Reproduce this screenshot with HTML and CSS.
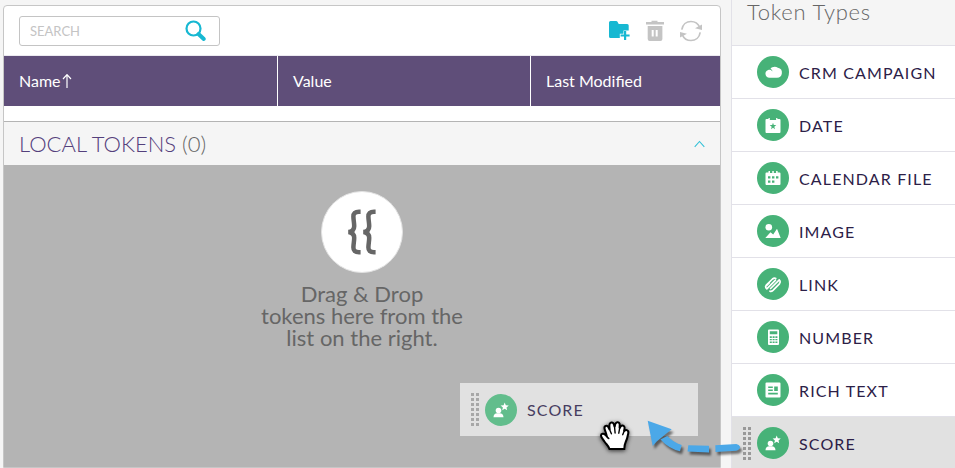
FILE: index.html
```html
<!DOCTYPE html>
<html lang="en">
<head>
<meta charset="utf-8">
<title>Tokens</title>
<link rel="stylesheet" href="styles.css">
</head>
<body>
<svg class="defs" aria-hidden="true">
  <symbol id="score" viewBox="0 0 32 32"><circle cx="13.500" cy="16.500" r="2.800"/><path d="M8.500 23.300c0-2.800 1.600-3.900 3.700-4h2.600c2.100.1 3.700 1.200 3.700 4zM19.700 8.500l1.100 2.800 3 .2-2.300 1.900.7 2.900-2.500-1.600-2.500 1.600.7-2.900-2.300-1.900 3-.2z"/></symbol>
</svg>
<div class="app">
  <main class="panel">
    <div class="toolbar">
      <div class="search"><span>SEARCH</span>
        <svg class="search-icon" viewBox="0 0 22 22"><circle cx="8.500" cy="8.500" r="7" fill="none" stroke="#17b8d2" stroke-width="2.200"/><path d="M13.500 14l5.300 5" stroke="#17b8d2" stroke-width="4" stroke-linecap="round"/></svg>
      </div>
      <div class="actions">
        <svg viewBox="0 0 22 22" width="22" height="22"><path fill="#17b8d2" d="M0 2.500Q0 1 1.500 1h5.700q.8 0 1.300.8L9.700 4h8.500q1.500 0 1.500 1.500v5h-5.200v3.300H10.800V18H1.500Q0 18 0 16.500z"/><path d="M16.100 11v9M11.600 15.500h9" stroke="#17b8d2" stroke-width="2.200"/></svg>
        <svg viewBox="0 0 20 22" width="20" height="22"><path fill="#c4c4c4" fill-rule="evenodd" d="M1 2h5.500V.7h6V2H19v2.400H1zM2.700 6h14.700v13q0 2-2 2H4.700q-2 0-2-2zm4 4v6.500h2V10zm4 0v6.500h2V10z"/></svg>
        <svg viewBox="0 0 24 22" width="24" height="22"><g fill="none" stroke="#c4c4c4" stroke-width="1.700"><path d="M2.800 9.700C3.600 4.500 7.500 1.500 12 1.500c4 0 7 2 8.700 5.700"/><path d="M21.200 12.300C20.400 17.500 16.500 20.500 12 20.500c-4 0-7-2-8.700-5.700"/></g><path fill="#c4c4c4" d="M16 8.300l7 1.700V4.500zM8 13.700L1 12v5.500z"/></svg>
      </div>
    </div>
    <div class="columns">
      <div>Name<svg class="sort" viewBox="0 0 10 16"><path d="M5 15V2M1 6l4-4.300L9 6" fill="none" stroke="#fff" stroke-width="1.200"/></svg></div>
      <div>Value</div>
      <div>Last Modified</div>
    </div>
    <div class="section">
      <h2>LOCAL TOKENS <span>(0)</span></h2>
      <svg viewBox="0 0 11 8"><path d="M.7 6.800L5.500 1.500l4.800 5.300" fill="none" stroke="#35c1d7" stroke-width="1.100"/></svg>
    </div>
    <div class="dropzone">
      <div class="disc"><svg viewBox="0 0 28 46"><g fill="none" stroke="#666" stroke-width="4.500"><path id="brace" d="M12.600 2.700H11q-5.800 0-5.600 5c.1 4 .8 6 .8 9.500q0 5-5.700 5.800 5.700.8 5.700 5.800c0 3.500-.7 5.500-.8 9.500q-.2 5 5.600 5h1.600"/><use href="#brace" x="15"/></g></svg></div>
      <div class="hint"><div>Drag &amp; Drop</div><div>tokens here from the</div><div>list on the right.</div></div>
    </div>
  </main>
  <aside class="types">
    <h1>Token Types</h1>
    <ul>
      <li><svg class="badge" viewBox="0 0 32 32"><path d="M12.500 21.700a4 4 0 0 1-1.300-7.800c1.600-.5 3.300.1 4.300 1.700-.3-1.500-1-2.300-2-2.800 1.500-2.100 5-2.600 7.400-1a5 5 0 0 1-1.100 9.900z"/></svg><span>CRM CAMPAIGN</span></li>
      <li><svg class="badge" viewBox="0 0 32 32"><path fill-rule="evenodd" d="M9.500 10h2V9h1.300v2h6.300V9h1.300v1h2.100q1 0 1 1v12q0 1-1 1h-13q-1 0-1-1V11q0-1 1-1zM16 13.700l-.8 2.300-2.500.1 2 1.600-.7 2.500 2-1.500 2 1.500-.7-2.500 2-1.600-2.500-.1z"/></svg><span>DATE</span></li>
      <li><svg class="badge" viewBox="0 0 32 32"><path fill-rule="evenodd" d="M9.500 10.500h2V9H13v2h2.300V9h1.500v2h2.300V9h1.500v1.500h1.900q1 0 1 1V22q0 1-1 1h-13q-1 0-1-1V11.500q0-1 1-1zM11 14.300v2.300h2.400v-2.300zm4 0v2.300h2.400v-2.300zm4 0v2.300h2.400v-2.300zM11 18.400v2.300h2.400v-2.300zm4 0v2.300h2.400v-2.300z"/></svg><span>CALENDAR FILE</span></li>
      <li><svg class="badge" viewBox="0 0 32 32"><circle cx="11.800" cy="12.300" r="3.300"/><path d="M8.300 23l5.200-5.800 2.700 2.200L20 13.800 23.700 23z"/></svg><span>IMAGE</span></li>
      <li><svg class="badge" viewBox="0 0 32 32"><g fill="none" stroke="#fff" stroke-width="1.700" stroke-linecap="round"><path d="M9.300 17.200l6.200-6.200q1.800-1.600 3.300-.6M9.800 20.800l8.700-8.700M13.600 20.500l8.700-8.700M13 23.200q1.500.5 3-.9l6.400-6.400M12.200 15l-2.500 2.500M22.800 12.600q1.100 1.600-.4 3.300M9.200 17.300q-1.100 1.300-.2 2.700"/></g></svg><span>LINK</span></li>
      <li><svg class="badge" viewBox="0 0 32 32"><path fill-rule="evenodd" d="M11 9.500q0-1 1-1h9q1 0 1 1V23q0 1-1 1h-9q-1 0-1-1zm1.800.8v2.900h7.500v-2.900zm0 5v1.600h2v-1.600zm2.800 0v1.600h2v-1.600zm2.800 0v1.600h2v-1.600zm-5.600 2.700v1.300h2V18zm2.800 0v1.300h2V18zm2.800 0v1.300h2V18zm-5.600 2.500v1.400h2v-1.400zm2.800 0v1.400h2v-1.400zm2.800 0v1.400h2v-1.400z"/></svg><span>NUMBER</span></li>
      <li><svg class="badge" viewBox="0 0 32 32"><path fill-rule="evenodd" d="M8.500 9.500q0-1 1-1h13q1 0 1 1v13q0 1-1 1h-13q-1 0-1-1zm2.700 3v1.400h4.600v-1.400zm0 3v1.400h4.600v-1.400zm6-3v4.400h3.600v-4.400zm-6 6.300v1.600h9.600v-1.600z"/></svg><span>RICH TEXT</span></li>
      <li class="selected"><i class="grip"></i><svg class="badge" viewBox="0 0 32 32"><use href="#score"/></svg><span>SCORE</span></li>
    </ul>
  </aside>
</div>
<div class="ghost"><i class="grip"></i><svg class="badge" viewBox="0 0 32 32"><use href="#score"/></svg><span>SCORE</span></div>
<svg class="hand" viewBox="0 0 32 34"><path d="M9.500 29c-.8-3-3.300-4.700-5.100-7.500C2.800 19 .9 17.300 1 15.500c.1-2 2.700-2.400 4.300-.6l1.500 1.500C6.500 13.500 5 11 4.500 8.500 4 6 7 4.700 8.400 7.200l1.300 2.600C9.400 7.500 9.100 5 9.800 3.600c.9-1.700 3.400-1.300 4 .5l.8 3c.2-2 .7-4.200 2.200-4.700 1.700-.5 3 .8 2.900 2.400l-.1 3.500c.6-1.400 1.300-3 2.900-2.800 1.800.2 2.300 1.700 2 3.200l-.5 2.800c.7-1.100 1.600-1.800 2.800-1.400 1.500.5 1.800 1.800 1.500 3.200-.7 3.700-1.400 6.400-2.700 9-.8 1.700-1.200 3.500-1.300 6.700z" fill="#fff" stroke="#000" stroke-width="2"/><path d="M9.700 9.800l1.700 4M14.600 7.500l.5 5.500M19.600 8.500l-.8 4.700M24 11.500l-1.300 3.200M6.800 16.400l2 2" fill="none" stroke="#000" stroke-width="1.400" stroke-linecap="round"/></svg>
<svg class="arrow" viewBox="0 0 100 45"><path d="M2.700 5.700l24 8.600-6.500 5.200-8.500 7L7.700 31z"/><path d="M22.300 21q6 6.500 14.400 8.900L35 36.300Q23.500 33.500 15.500 24.500zM43.300 30.200l20.700.6v6.800l-21.500-1.200zM70.300 30.300l21-1.300q3 .3 3.900 3-1 3.400-3.900 3.700l-20.800 1.200z"/></svg>
</body>
</html>
```
FILE: styles.css
```css
* { box-sizing: border-box; }
body { margin: 0; height: 468px; overflow: hidden; background: #f5f5f5; font-family: Lato, "Liberation Sans", sans-serif; position: relative; }
.defs { display: none; }
.app { display: flex; height: 468px; justify-content: space-between; padding-left: 3px; }
.panel { width: 718px; height: 463px; margin-top: 5px; border: 1px solid #c6c6c6; border-radius: 4px 4px 0 0; background: #fff; display: flex; flex-direction: column; overflow: hidden; }
.toolbar { height: 50px; flex: none; display: flex; justify-content: space-between; align-items: center; padding: 0 17px 0 15px; border-bottom: 1px solid #eceaf0; }
.search { width: 201px; height: 30px; border: 1px solid #c4c4c4; border-radius: 3px; display: flex; align-items: center; justify-content: space-between; padding: 0 12px 0 10px; font-size: 13px; color: #c4c4c4; }
.search-icon { width: 22px; height: 22px; }
.actions { display: flex; align-items: center; gap: 14px; }
.actions svg { display: block; }
.columns { height: 50px; flex: none; display: grid; grid-template-columns: 273px 253px 1fr; background: #5f4e79; color: #fff; font-size: 16px; }
.columns div { display: flex; align-items: center; padding: 0 0 1px 15px; border-left: 1px solid #fff; }
.columns div:first-child { border-left: 0; }
.sort { width: 10px; height: 16px; margin: 1px 0 0 1px; }
.section { height: 44px; flex: none; margin-top: 15px; border-top: 1px solid #b4b4b4; background: #f5f5f5; display: flex; align-items: center; justify-content: space-between; padding: 0 15px; }
.section h2 { margin: 0; font-size: 22px; font-weight: 300; color: #54407c; }
.section h2 span { color: #666; }
.section svg { width: 11px; height: 8px; }
.dropzone { flex: 1; background: #b4b4b4; display: flex; flex-direction: column; align-items: center; padding-top: 26px; }
.disc { width: 82px; height: 82px; border-radius: 50%; background: #fff; border: 1px solid #e2e2e2; display: flex; align-items: center; justify-content: center; }
.disc svg { width: 28px; height: 46px; overflow: visible; }
.hint { margin-top: 10px; font-size: 22px; line-height: 22px; text-align: center; color: #666; }
.types { width: 224px; border-left: 1px solid #e2e1e8; background: #fff; }
.types h1 { margin: 0; height: 46px; background: #f5f5f5; border-bottom: 1px solid #e2e1e8; padding-left: 15px; font-size: 22px; line-height: 23px; font-weight: 300; letter-spacing: .75px; color: #666; }
.types ul { list-style: none; margin: 0; padding: 0; }
.types li { height: 53px; border-bottom: 1px solid #e2e1e8; display: flex; align-items: center; padding-left: 25px; }
.types li.selected { background: #e1e1e1; padding-left: 11px; }
.badge { width: 32px; height: 32px; flex: none; border-radius: 50%; background: #47b278; fill: #fff; }
.types li span, .ghost span { margin: 0 0 0 10px; font-size: 16px; letter-spacing: 1.13px; color: #2c2047; white-space: nowrap; }
.grip { flex: none; width: 8px; height: 33px; margin-right: 6px; background: repeating-linear-gradient(to bottom, transparent 0 3px, #e1e1e1 3px 5px), linear-gradient(to right, #999 0 3px, transparent 3px 5px, #999 5px 8px); }
.ghost { position: absolute; left: 460px; top: 383px; width: 238px; height: 53px; background: #e1e1e1; display: flex; align-items: center; padding-left: 11px; }
.ghost .badge { background: #62bd8c; }
.ghost span { color: #473d60; }
.ghost .grip { opacity: .8; }
.hand { position: absolute; left: 600px; top: 420px; width: 32px; height: 34px; filter: drop-shadow(0 1px 2px rgba(0,0,0,.7)); overflow: visible; }
.arrow { position: absolute; left: 645px; top: 415px; width: 100px; height: 45px; fill: #4ba8e8; overflow: visible; filter: drop-shadow(2px 3px 1px rgba(0,0,0,.5)); }
```
